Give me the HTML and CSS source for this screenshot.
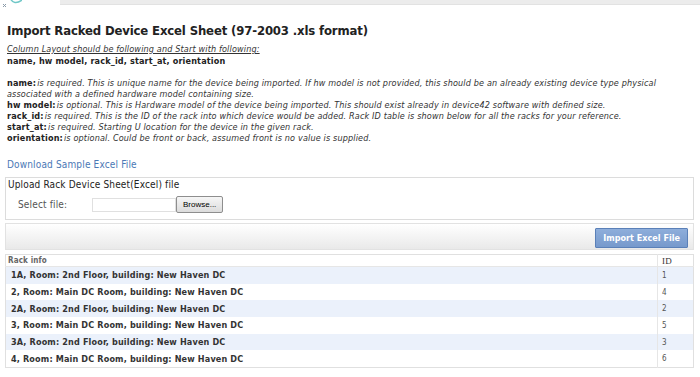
FILE: index.html
```html
<!DOCTYPE html>
<html lang="en">
  <head>
    <meta charset="UTF-8" />
    <title>Import Racked Device Excel Sheet</title>
    <link rel="stylesheet" href="styles.css">
  </head>
  <body>
    <div class="topbar">
      <div class="topbar-icon">
        <svg width="22" height="12" viewBox="0 0 22 12">
          <path d="M3 9 L6 6 M6 9 L3 6" stroke="#8a9aa8" stroke-width="1" fill="none" />
          <path d="M10 0 Q14 8 22 2" stroke="#6fc7c7" stroke-width="1.5" fill="none" />
        </svg>
      </div>
      <div class="topbar-strip"></div>
    </div>

    <div class="content">
      <h1>Import Racked Device Excel Sheet (97-2003 .xls format)</h1>

      <p class="layout-note">Column Layout should be following and Start with following:</p>
      <p class="columns">name, hw model, rack_id, start_at, orientation</p>

      <div class="fields">
        <p><b>name:</b><i>is required. This is unique name for the device being imported. If hw model is not provided, this should be an already existing device type physical associated with a defined hardware model containing size.</i></p>
        <p><b>hw model:</b><i>is optional. This is Hardware model of the device being imported. This should exist already in device42 software with defined size.</i></p>
        <p><b>rack_id:</b><i>is required. This is the ID of the rack into which device would be added. Rack ID table is shown below for all the racks for your reference.</i></p>
        <p><b>start_at:</b><i>is required. Starting U location for the device in the given rack.</i></p>
        <p><b>orientation:</b><i>is optional. Could be front or back, assumed front is no value is supplied.</i></p>
      </div>

      <a class="download" href="#">Download Sample Excel File</a>

      <div class="upload-box">
        <div class="upload-title">Upload Rack Device Sheet(Excel) file</div>
        <div class="upload-row">
          <span class="upload-label">Select file:</span>
          <span class="file-input"></span>
          <button class="browse">Browse...</button>
        </div>
      </div>

      <div class="submit-bar">
        <button class="import-btn">Import Excel File</button>
      </div>

      <table class="racks">
        <thead>
          <tr><th>Rack info</th><th class="id-col">ID</th></tr>
        </thead>
        <tbody>
          <tr><td>1A, Room: 2nd Floor, building: New Haven DC</td><td class="id-col">1</td></tr>
          <tr><td>2, Room: Main DC Room, building: New Haven DC</td><td class="id-col">4</td></tr>
          <tr><td>2A, Room: 2nd Floor, building: New Haven DC</td><td class="id-col">2</td></tr>
          <tr><td>3, Room: Main DC Room, building: New Haven DC</td><td class="id-col">5</td></tr>
          <tr><td>3A, Room: 2nd Floor, building: New Haven DC</td><td class="id-col">3</td></tr>
          <tr><td>4, Room: Main DC Room, building: New Haven DC</td><td class="id-col">6</td></tr>
        </tbody>
      </table>
    </div>
  </body>
</html>
```

FILE: styles.css
```css
body {
  margin: 0;
  background-color: #fff;
  color: #222;
  font-family: "DejaVu Sans Condensed", "DejaVu Sans", Verdana, sans-serif;
  font-stretch: condensed;
  font-size: 9px;
  letter-spacing: 0.15px;
}

.topbar {
  display: flex;
  height: 5px;
}

.topbar-icon {
  width: 60px;
  position: relative;
}

.topbar-icon svg {
  position: absolute;
  left: 0;
  top: -2px;
}

.topbar-strip {
  flex: 1;
  background-color: #ececec;
  border-bottom: 1px solid #e2e2e2;
}

.content {
  padding: 0 6px 0 5px;
}

h1 {
  margin: 18px 0 5px 2px;
  font-size: 13px;
  font-weight: bold;
  letter-spacing: -0.15px;
  line-height: 15px;
  color: #222;
}

p {
  margin: 0;
}

.layout-note {
  margin-left: 2px;
  font-style: italic;
  text-decoration: underline;
  color: #333;
  line-height: 12px;
}

.columns {
  margin-left: 2px;
  font-weight: bold;
  line-height: 12px;
}

.fields {
  margin: 11px 0 0 2px;
  line-height: 11px;
}

.fields b {
  margin-right: 1px;
}

.fields i {
  color: #333;
}

.download {
  display: block;
  margin: 15px 0 6px 2px;
  line-height: 12px;
  color: #4a78b5;
  text-decoration: none;
  font-size: 10px;
}

.upload-box {
  border: 1px solid #dcdcdc;
  height: 43px;
  padding: 1px 0 0 2px;
  box-sizing: border-box;
}

.upload-title {
  font-size: 10px;
  line-height: 12px;
  color: #222;
}

.upload-row {
  display: flex;
  align-items: center;
  margin-top: 5px;
  padding-left: 10px;
}

.upload-label {
  width: 74px;
  color: #555;
  font-size: 10px;
}

.file-input {
  width: 84px;
  height: 14px;
  border: 1px solid #e0e0e0;
  box-sizing: border-box;
}

.browse {
  height: 17px;
  padding: 0 6px;
  font-family: "Liberation Sans", Arial, sans-serif;
  font-size: 8px;
  letter-spacing: 0;
  color: #000;
  background: linear-gradient(#f6f6f6, #dcdcdc);
  border: 1px solid #8e8e8e;
  border-radius: 2px;
}

.submit-bar {
  display: flex;
  justify-content: flex-end;
  margin-top: 3px;
  height: 27px;
  padding: 4px 5px 0 0;
  box-sizing: border-box;
  border: 1px solid #e2e2e2;
  background: linear-gradient(#ffffff, #e9e9e9);
}

.import-btn {
  height: 20px;
  padding: 0 7px;
  font-family: inherit;
  font-stretch: condensed;
  font-size: 9px;
  font-weight: bold;
  letter-spacing: 0;
  color: #fff;
  background: linear-gradient(#8eaedb, #7699cc);
  border: 1px solid #5a80b8;
  border-radius: 1px;
}

.racks {
  width: 100%;
  margin-top: 4px;
  border-collapse: collapse;
  border: 1px solid #e0e0e0;
}

.racks th {
  text-align: left;
  font-size: 8px;
  color: #666;
  height: 11px;
  padding: 0 0 0 2px;
  border-bottom: 1px solid #e6e6e6;
}

.racks th.id-col {
  font-family: "Liberation Serif", serif;
  font-weight: normal;
  color: #333;
  font-size: 9px;
}

.racks td {
  height: 16.7px;
  padding: 0 0 0 5px;
  font-weight: bold;
  color: #333;
}

.racks tbody tr:nth-child(odd) {
  background-color: #ebf1fb;
}

.racks .id-col {
  width: 31px;
  border-left: 1px solid #e6e6e6;
  padding-left: 4px;
}

.racks td.id-col {
  font-weight: normal;
  color: #555;
  font-size: 8px;
}
```
